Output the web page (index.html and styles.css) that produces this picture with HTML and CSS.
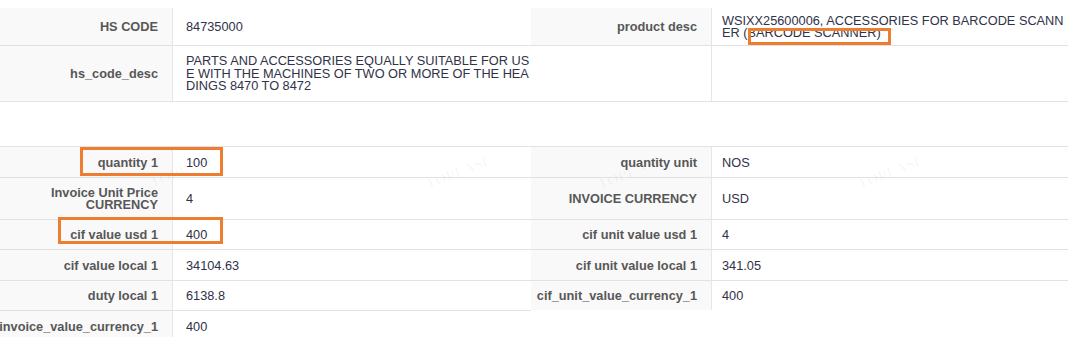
FILE: index.html
```html
<!DOCTYPE html>
<html lang="en">
<head>
<meta charset="utf-8">
<title>Shipment record</title>
<link rel="stylesheet" href="styles.css">
</head>
<body>
<div class="page">
  <div class="grid grid--top">
    <div class="cell label">HS CODE</div>
    <div class="cell value">84735000</div>
    <div class="cell label label--r">product desc</div>
    <div class="cell value value--r">WSIXX25600006, ACCESSORIES FOR BARCODE SCANNER (BARCODE SCANNER)</div>

    <div class="cell label">hs_code_desc</div>
    <div class="cell value">PARTS AND ACCESSORIES EQUALLY SUITABLE FOR USE WITH THE MACHINES OF TWO OR MORE OF THE HEADINGS 8470 TO 8472</div>
    <div class="cell label label--r label--blank"></div>
    <div class="cell value value--r"></div>
  </div>

  <div class="grid grid--main">
    <div class="cell label">quantity 1</div>
    <div class="cell value">100</div>
    <div class="cell label label--r">quantity unit</div>
    <div class="cell value value--r">NOS</div>

    <div class="cell label">Invoice Unit Price CURRENCY</div>
    <div class="cell value">4</div>
    <div class="cell label label--r">INVOICE CURRENCY</div>
    <div class="cell value value--r">USD</div>

    <div class="cell label">cif value usd 1</div>
    <div class="cell value">400</div>
    <div class="cell label label--r">cif unit value usd 1</div>
    <div class="cell value value--r">4</div>

    <div class="cell label">cif value local 1</div>
    <div class="cell value">34104.63</div>
    <div class="cell label label--r">cif unit value local 1</div>
    <div class="cell value value--r">341.05</div>

    <div class="cell label">duty local 1</div>
    <div class="cell value">6138.8</div>
    <div class="cell label label--r cell--end">cif_unit_value_currency_1</div>
    <div class="cell value value--r cell--end">400</div>

    <div class="cell label">invoice_value_currency_1</div>
    <div class="cell value">400</div>
  </div>

  <span class="mark mark--1">TOPEASE</span>
  <span class="mark mark--2">TOPEASE</span>
  <span class="mark mark--3">TOPEASE</span>
  <span class="mark mark--4">TOPEASE</span>

  <div class="hl hl--desc"></div>
  <div class="hl hl--qty"></div>
  <div class="hl hl--cif"></div>
</div>
</body>
</html>
```

FILE: styles.css
```css
html, body {
  margin: 0;
  padding: 0;
  background: #ffffff;
}

.page {
  position: relative;
  width: 1068px;
  height: 337px;
  overflow: hidden;
  padding-top: 8px;
  box-sizing: border-box;
  font-family: "Liberation Sans", Arial, sans-serif;
  font-size: 12.75px;
  line-height: 12.5px;
}

.grid {
  display: grid;
  grid-template-columns: 173px 358px 181px 1fr;
}

.grid--top {
  grid-template-rows: 38px 56px;
}

.grid--top .cell {
  padding-top: 1px;
  padding-bottom: 0;
}

.grid--main {
  margin-top: 44px;
  border-top: 1px solid #e2e2e2;
}

.cell {
  display: flex;
  align-items: center;
  padding: 9.5px 0 7.5px;
  border-bottom: 1px solid #e2e2e2;
  box-sizing: border-box;
}

.label {
  justify-content: flex-end;
  text-align: right;
  padding-right: 14px;
  background: #f9f9f9;
  border-right: 1px solid #e6e6e6;
  color: #575757;
  font-weight: bold;
  line-height: 12px;
}

.label--blank {
  background: #ffffff;
}

.value {
  padding-left: 13px;
  color: #303248;
  word-break: break-all;
}

.value--r {
  padding-left: 10px;
  padding-right: 2px;
}

.cell--end {
  border-bottom: none;
  height: 29px;
  align-self: start;
}

.mark {
  position: absolute;
  font-family: "Liberation Serif", serif;
  font-size: 15px;
  font-weight: bold;
  color: rgba(0, 0, 0, 0.03);
  transform: rotate(-22deg);
  pointer-events: none;
}

.mark--1 { left: 148px; top: 164px; }
.mark--2 { left: 424px; top: 166px; }
.mark--3 { left: 596px; top: 166px; }
.mark--4 { left: 856px; top: 166px; }

.hl {
  position: absolute;
  border: 3px solid #ed7d31;
  box-sizing: border-box;
}

.hl--desc { left: 748px; top: 28px; width: 143px; height: 17px; }
.hl--qty  { left: 80px;  top: 147px; width: 143px; height: 29px; }
.hl--cif  { left: 58px;  top: 217px; width: 165px; height: 27px; }
```
